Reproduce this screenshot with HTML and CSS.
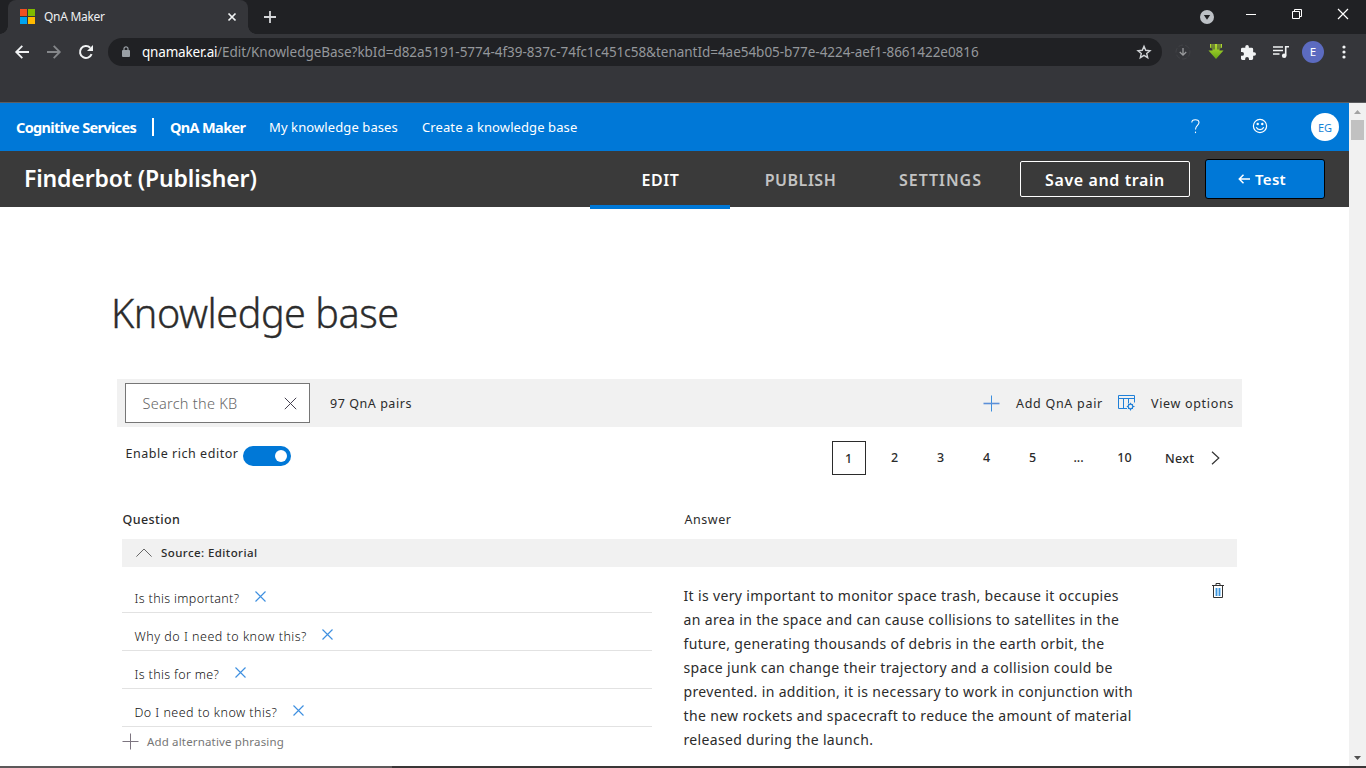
FILE: index.html
```html
<!DOCTYPE html>
<html lang="en">
<head>
<meta charset="utf-8">
<title>QnA Maker</title>
<link rel="stylesheet" href="styles.css">
</head>
<body>
<div class="browser">
  <div class="tabstrip">
    <div class="tab">
      <svg class="favicon" width="15" height="15" viewBox="0 0 15 15"><path fill="#f25022" d="M0 0h7v7H0z"/><path fill="#7fba00" d="M8 0h7v7H8z"/><path fill="#00a4ef" d="M0 8h7v7H0z"/><path fill="#ffb900" d="M8 8h7v7H8z"/></svg>
      <span class="tab-title">QnA Maker</span>
      <svg class="tab-close" width="8" height="8" viewBox="0 0 8 8" stroke="#f1f3f4" stroke-width="1.7"><path d="M.5.5l7 7M7.500.5l-7 7"/></svg>
    </div>
    <svg class="new-tab" width="12" height="12" viewBox="0 0 12 12" stroke="#d5d7da" stroke-width="1.8"><path d="M6 0v12M0 6h12"/></svg>
    <div class="window-buttons">
      <svg width="14" height="14" viewBox="0 0 14 14"><circle cx="7" cy="7" r="7" fill="#bdc1c6"/><path d="M3.800 5h6.400L7 9.800z" fill="#202124"/></svg>
      <svg class="win-min" width="10" height="10" viewBox="0 0 10 10"><path d="M0 4h10v1H0z" fill="#fff"/></svg>
      <svg class="win-max" width="10" height="10" viewBox="0 0 10 10" fill="none" stroke="#fff"><path d="M.5 2.500h7v7h-7zM2.500 2.500v-2h7v7h-2"/></svg>
      <svg class="win-close" width="10" height="10" viewBox="0 0 10 10" stroke="#fff" stroke-width="1.2"><path d="M0 0l10 10M10 0L0 10"/></svg>
    </div>
  </div>
  <div class="toolbar">
    <svg class="nav-back" width="14" height="14" viewBox="0 0 14 14" fill="none" stroke="#f1f3f4" stroke-width="1.800"><path d="M14 7H1.500M7.300.8L1.200 7l6.100 6.200"/></svg>
    <svg class="nav-forward" width="14" height="14" viewBox="0 0 14 14" fill="none" stroke="#85878a" stroke-width="1.800"><path d="M0 7h12.500M6.700.8L12.800 7l-6.100 6.200"/></svg>
    <svg class="nav-reload" width="14" height="14" viewBox="0 0 14 14"><path d="M12.600 9.200A6 6 0 1 1 11.200 2.700" fill="none" stroke="#f1f3f4" stroke-width="2"/><path d="M14 0v6H8z" fill="#f1f3f4"/></svg>
    <div class="omnibox">
      <svg class="lock" width="8" height="11" viewBox="0 0 8 11"><path d="M2 5V2.800a2 2 0 0 1 4 0V5" fill="none" stroke="#9aa0a6" stroke-width="1.200"/><rect y="4" width="8" height="7" rx="1" fill="#9aa0a6"/></svg>
      <span class="host">qnamaker.ai</span><span class="path">/Edit/KnowledgeBase?kbId=d82a5191-5774-4f39-837c-74fc1c451c58&amp;tenantId=4ae54b05-b77e-4224-aef1-8661422e0816</span>
      <svg class="star" width="14" height="14" viewBox="0 0 14 14" fill="none" stroke="#d0d3d6" stroke-width="1.400"><path d="M7 1.300l1.700 4 4.300.4-3.300 2.800 1 4.200L7 10.400l-3.700 2.300 1-4.200L1 5.700l4.300-.4z"/></svg>
    </div>
    <div class="extensions">
      <svg width="16" height="16" viewBox="0 0 16 16" fill="none"><circle cx="8" cy="8" r="7" stroke="#414246" stroke-dasharray="5 2"/><path d="M8 4v7M4.800 8L8 11.200 11.200 8" stroke="#9a9b9d" stroke-width="1.300"/></svg>
      <svg width="16" height="16" viewBox="0 0 16 16"><defs><linearGradient id="g" x2="0" y2="1"><stop stop-color="#b5df31"/><stop offset="1" stop-color="#68a617"/></linearGradient></defs><path fill="url(#g)" d="M2 0v3.500l1.500 1V0zM4.500 0v6.500H.5L8 15l7.500-8.500h-4V0h-1v5.500h-1V0h-3v5.500h-1V0zM12.500 0v4.500l1.500-1V0z"/></svg>
      <svg width="15" height="15" viewBox="2 1 21 21"><path fill="#f1f3f4" d="M20.500 11H19V7a2 2 0 0 0-2-2h-4V3.500a2.500 2.500 0 0 0-5 0V5H4a2 2 0 0 0-2 2v3.800h1.500a2.700 2.700 0 0 1 0 5.400H2V20a2 2 0 0 0 2 2h3.800v-1.500a2.700 2.700 0 0 1 5.400 0V22H17a2 2 0 0 0 2-2v-4h1.500a2.500 2.500 0 0 0 0-5z"/></svg>
      <svg width="16" height="14" viewBox="0 0 16 14"><path d="M0 2h10M0 5.500h10M0 9h6.500" stroke="#f1f3f4" stroke-width="1.500"/><path d="M12.700 10.500V1.800H16" fill="none" stroke="#f1f3f4" stroke-width="1.600"/><circle cx="11.200" cy="10.700" r="2.300" fill="#f1f3f4"/></svg>
      <span class="profile">E</span>
      <svg width="4" height="14" viewBox="0 0 4 14" fill="#f1f3f4"><circle cx="2" cy="2" r="1.600"/><circle cx="2" cy="7" r="1.600"/><circle cx="2" cy="12" r="1.600"/></svg>
    </div>
  </div>
</div>

<div class="viewport">
  <div class="page">
    <header class="topbar">
      <span class="brand">Cognitive Services</span>
      <span class="divider"></span>
      <span class="product">QnA Maker</span>
      <a class="link">My knowledge bases</a>
      <a class="link create">Create a knowledge base</a>
      <div class="account">
        <svg width="9" height="15" viewBox="0 0 9 15" fill="none" stroke="#fff" stroke-width="1.100"><path d="M.8 3.600C.8 1.700 2.300.7 4.300.7S8 1.800 8 3.600C8 6.500 4.500 6.600 4.500 10.600"/><path d="M4.500 12.600v1.500"/></svg>
        <svg class="smile" width="16" height="16" viewBox="0 0 16 16" fill="none" stroke="#fff" stroke-width="1.200"><circle cx="8" cy="8" r="6.600"/><path d="M4.300 9.300c1.200 3 6.200 3 7.400 0"/><circle cx="5.700" cy="6" r=".6" fill="#fff"/><circle cx="10.300" cy="6" r=".6" fill="#fff"/></svg>
        <span class="avatar">EG</span>
      </div>
    </header>
    <div class="kb-bar">
      <div class="kb-name">Finderbot (Publisher)</div>
      <nav class="tabs">
        <a class="active">EDIT</a>
        <a class="publish">PUBLISH</a>
        <a class="settings">SETTINGS</a>
      </nav>
      <button class="save">Save and train</button>
      <button class="test"><svg width="12" height="10" viewBox="0 0 12 10" fill="none" stroke="#fff" stroke-width="1.500"><path d="M12 5H1.500M5.500.8L1.300 5l4.200 4.200"/></svg>Test</button>
    </div>
    <main>
      <h1>Knowledge base</h1>
      <div class="commands">
        <div class="search"><span>Search the KB</span><svg width="13" height="13" viewBox="0 0 13 13" stroke="#444050"><path d="M.8.8l11.400 11.400M12.200.8L.8 12.200"/></svg></div>
        <span class="count">97 QnA pairs</span>
        <svg class="plus" width="17" height="17" viewBox="0 0 17 17"><path d="M8.500.5v16" stroke="#3a8ede"/><path d="M.5 8.500h16" stroke="#5b8fd8" stroke-width="1.600"/></svg>
        <span class="add-pair">Add QnA pair</span>
        <svg class="view-icon" width="17" height="16" viewBox="0 0 17 16" fill="none" stroke="#2080d8"><path d="M9 13.500H.5V.5h16v7M.5 3.500h16M5.500 4v9M10.500 4v4.500"/><circle cx="12.500" cy="11.500" r="2.300" stroke-width="1.200"/><path d="M12.500 7.800v1.400M12.500 13.800v1.700M8.800 11.500h1.400M14.800 11.500h1.700M9.900 8.900l1 1M14.100 13.100l1 1M15.100 8.900l-1 1M10.900 13.100l-1 1"/></svg>
        <span class="view">View options</span>
      </div>
      <div class="options">
        <span class="rich">Enable rich editor</span>
        <span class="toggle"><i></i></span>
        <div class="pager">
          <a class="current">1</a><a>2</a><a>3</a><a>4</a><a>5</a><a>...</a><a>10</a>
          <span class="next">Next</span>
          <svg width="9" height="14" viewBox="0 0 9 14" fill="none" stroke="#333" stroke-width="1.200"><path d="M1 .8L7.800 7 1 13.200"/></svg>
        </div>
      </div>
      <div class="columns head"><span class="question">Question</span><span class="answer-head">Answer</span></div>
      <div class="source"><svg width="16" height="9" viewBox="0 0 16 9" fill="none" stroke="#666"><path d="M.4 8.600L8 1l7.600 7.600"/></svg><span>Source: Editorial</span></div>
      <div class="columns pair">
        <div class="questions">
          <div class="q"><span class="q1">Is this important?</span><svg class="x" width="11" height="11" viewBox="0 0 11 11"><path d="M.5.5l10 10M10.500.5l-10 10"/></svg></div>
          <div class="q"><span>Why do I need to know this?</span><svg class="x" width="11" height="11" viewBox="0 0 11 11"><path d="M.5.5l10 10M10.500.5l-10 10"/></svg></div>
          <div class="q"><span class="q1">Is this for me?</span><svg class="x" width="11" height="11" viewBox="0 0 11 11"><path d="M.5.5l10 10M10.500.5l-10 10"/></svg></div>
          <div class="q"><span class="q4">Do I need to know this?</span><svg class="x" width="11" height="11" viewBox="0 0 11 11"><path d="M.5.5l10 10M10.500.5l-10 10"/></svg></div>
          <div class="add-alt"><svg width="17" height="17" viewBox="0 0 17 17" stroke="#7d7580"><path d="M8.500.5v16M.5 8.500h16"/></svg><span>Add alternative phrasing</span></div>
        </div>
        <p class="answer">It is very important to monitor space trash, because it occupies<br>an area in the space and can cause collisions to satellites in the<br>future, generating thousands of debris in the earth orbit, the<br>space junk can change their trajectory and a collision could be<br>prevented. in addition, it is necessary to work in conjunction with<br>the new rockets and spacecraft to reduce the amount of material<br>released during the launch.</p>
        <svg class="trash" width="12" height="16" viewBox="0 0 12 16" fill="none"><path d="M3 5h6v8H3z" fill="#a9d4f4"/><path d="M4.500 5v8M7.500 5v8" stroke="#3f95dc"/><path d="M0 2.500h12M4 2V.5h4V2M1.500 2.500v12h9v-12" stroke="#333"/></svg>
      </div>
    </main>
  </div>
  <div class="scrollbar">
    <svg width="7" height="4" viewBox="0 0 7 4"><path d="M0 4h7L3.500 0z" fill="#a3a3a3"/></svg>
    <i class="thumb"></i>
    <svg class="down" width="7" height="4" viewBox="0 0 7 4"><path d="M0 0h7L3.500 4z" fill="#505050"/></svg>
  </div>
</div>
<div class="taskbar"><i></i></div>
</body>
</html>
```
FILE: styles.css
```css
* { box-sizing: border-box; }
body { margin: 0; width: 1366px; height: 768px; overflow: hidden; background: #fff; color: #2b2b2b; font-family: "Noto Sans", "Open Sans", sans-serif; white-space: nowrap; }
svg { display: block; flex: none; overflow: visible; }

/* Browser frame */
.browser { height: 103px; background: #35363a; border-bottom: 1px solid #5c5d60; }
.tabstrip { display: flex; height: 34px; background: #202124; }
.tab { position: relative; display: flex; width: 240px; height: 34px; margin-left: 8px; padding-left: 12px; background: #35363a; border-radius: 8px 8px 0 0; }
.tab::before, .tab::after { content: ""; position: absolute; bottom: 0; width: 8px; height: 8px; }
.tab::before { left: -8px; background: radial-gradient(circle at 0 0, #202124 7.5px, #35363a 8px); }
.tab::after { right: -8px; background: radial-gradient(circle at 100% 0, #202124 7.5px, #35363a 8px); }
.favicon { margin-top: 9px; }
.tab-title { margin-left: 9px; width: 184px; line-height: 33px; font-size: 12px; letter-spacing: -.3px; color: #eef0f2; }
.tab-close { margin-top: 13px; }
.new-tab { margin: 11px 0 0 16px; }
.window-buttons { display: flex; margin: 10px 18px 0 auto; }
.win-min { margin-left: 32px; }
.win-max { margin: -1px 0 0 36px; }
.win-close { margin: -1px 0 0 36px; }
.toolbar { display: flex; align-items: center; height: 36px; padding-left: 15px; }
.nav-forward { margin-left: 18px; }
.nav-reload { margin-left: 18px; }
.omnibox { display: flex; align-items: center; width: 1054px; height: 28px; margin-left: 15px; padding-left: 14px; border-radius: 14px; background: #202124; font-size: 13.5px; line-height: 28px; }
.host { margin-left: 12px; width: 75px; color: #fff; letter-spacing: -.18px; }
.path { width: 920px; color: #94979b; letter-spacing: -.03px; }
.lock { margin-top: -1px; }
.extensions { display: flex; align-items: center; justify-content: space-between; width: 171px; margin-left: 13px; }
.profile { width: 22px; height: 22px; margin: 0 1px 0 -4px; border-radius: 50%; background: #5c6bc0; color: #fff; font-size: 11.5px; line-height: 22px; text-align: center; }

.viewport { display: flex; height: 663px; }
.page { width: 1349px; }

/* Service header */
.topbar { display: flex; align-items: center; height: 48px; padding-left: 16px; background: #0078d7; color: #fff; }
.brand, .product { font-size: 14.5px; font-weight: 700; line-height: 50px; letter-spacing: -.65px; }
.brand { width: 136px; }
.divider { width: 2px; height: 18px; background: #fff; }
.product { width: 99px; margin-left: 16px; }
.link { width: 153px; font-size: 13px; letter-spacing: .1px; }
.account { display: flex; align-items: center; margin: 0 10px 0 auto; }
.account svg { margin-top: -2px; }
.account .smile { margin-left: 52px; }
.avatar { width: 28px; height: 28px; margin-left: 43px; border-radius: 50%; background: #fff; color: #1683d8; font-size: 11px; line-height: 29px; text-align: center; }

/* Knowledge base bar */
.kb-bar { display: flex; height: 56px; padding-left: 24px; background: #3a3a3a; color: #fff; }
.kb-name { width: 566px; font-size: 23px; font-weight: 600; line-height: 54px; letter-spacing: -.15px; }
.tabs { display: flex; width: 420px; height: 58px; }
.tabs a { width: 140px; padding-left: 1px; font-size: 16px; font-weight: 600; line-height: 59px; text-align: center; letter-spacing: .55px; color: #c3c3c3; }
.tabs .active { position: relative; color: #fff; border-bottom: 4px solid #0078d7; }
.tabs .settings { letter-spacing: .95px; }
button { display: flex; align-items: center; justify-content: center; padding: 0; font-family: inherit; font-weight: 600; color: #fff; border-radius: 2px; }
.save { width: 170px; height: 36px; margin: 10px 15px 0 10px; padding-top: 1px; border: 1px solid #fff; background: transparent; font-size: 16px; letter-spacing: .6px; }
.test { gap: 5px; width: 120px; height: 40px; margin-top: 8px; padding-right: 6px; border: 1px solid #000; border-radius: 3px; background: #0078d7; font-size: 15px; letter-spacing: .3px; }

/* Content */
main { padding-left: 117px; }
h1 { margin: 0 0 0 -6px; padding-top: 76px; height: 172px; font-size: 39.5px; font-weight: 300; line-height: 60px; letter-spacing: -.45px; color: #2c2c2c; -webkit-text-stroke: .35px #2c2c2c; }
.commands { display: flex; align-items: center; width: 1125px; height: 48px; padding-left: 8px; background: #f1f1f1; font-size: 12.5px; letter-spacing: .55px; }
.search { display: flex; align-items: center; justify-content: space-between; width: 185px; height: 40px; padding: 0 12px 0 16.5px; border: 1px solid #767676; background: #fff; color: #666; font-size: 14.5px; font-weight: 300; letter-spacing: .27px; }
.count { margin-left: 20px; width: 653px; }
.add-pair { margin-left: 16px; width: 102px; letter-spacing: .71px; }
.view { margin-left: 16px; letter-spacing: .68px; }
.options { display: flex; width: 1125px; height: 79px; padding-left: 8px; }
.rich { width: 118px; padding: 18px 0 0 .5px; font-size: 12.5px; line-height: 18px; letter-spacing: .53px; }
.toggle { display: flex; justify-content: flex-end; width: 48px; height: 20px; margin-top: 19px; padding: 4px; border-radius: 10px; background: #0078d7; }
.toggle i { width: 12px; height: 12px; border-radius: 50%; background: #fff; }
.pager { display: flex; align-items: center; height: 34px; margin: 14px 22px 0 auto; font-size: 12.5px; font-weight: 550; }
.pager a { width: 34px; margin-right: 12px; padding-right: 1px; line-height: 36px; text-align: center; }
.pager .current { height: 34px; line-height: 34px; border: 1px solid #2b2b2b; }
.next { margin-left: 11px; width: 46px; letter-spacing: .3px; }
.columns { display: flex; width: 1120px; padding-left: 5px; }
.head { height: 33px; padding-left: 5.5px; font-size: 12.5px; line-height: 28px; }
.question { width: 562px; font-weight: 500; letter-spacing: .4px; }
.answer-head { letter-spacing: .54px; }
.source { display: flex; align-items: center; width: 1115px; height: 28px; margin-left: 5px; padding-left: 14px; background: #f1f1f1; font-size: 11.5px; font-weight: 550; letter-spacing: .42px; color: #2b2b2b; }
.source svg { margin-top: -1px; }
.source span { margin-left: 9px; line-height: 26px; }
.pair { padding-top: 8px; }
.questions { width: 530px; }
.q { display: flex; height: 38px; padding: 9px 0 0 12.5px; border-bottom: 1px solid #e2e2e2; font-size: 12.5px; font-weight: 300; line-height: 30px; letter-spacing: .5px; color: #111; }
.q .q1 { letter-spacing: .35px; }
.q .q4 { letter-spacing: .45px; }
.x { margin: 7px 0 0 15.5px; stroke: #3f90e0; stroke-width: 1.15; }
.add-alt { display: flex; align-items: center; height: 29px; font-size: 11.5px; letter-spacing: .16px; color: #767676; }
.add-alt span { margin-left: 8px; line-height: 30px; }
.answer { width: 528px; margin: 9px 0 0; padding-left: 31.5px; font-size: 14px; line-height: 24px; letter-spacing: .35px; }
.trash { margin: 8px 0 0 32px; }

.scrollbar { display: flex; flex-direction: column; align-items: center; width: 17px; padding: 7px 0 6px; background: #f1f1f1; }
.thumb { width: 13px; height: 20px; margin-top: 6px; background: #c1c1c1; }
.down { margin-top: auto; }
.taskbar { height: 2px; background: #3a3637; }
.taskbar i { display: block; width: 392px; height: 2px; background: #5d595a; }
```
